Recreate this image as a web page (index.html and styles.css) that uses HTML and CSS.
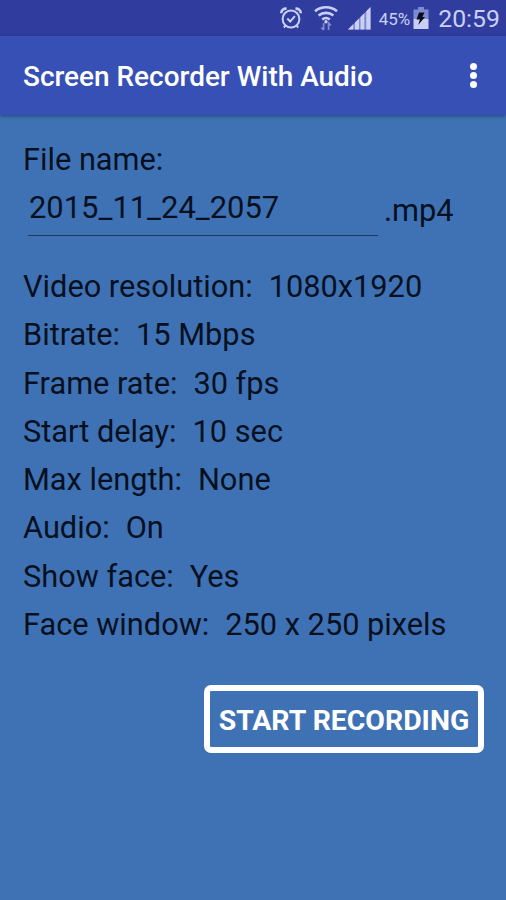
FILE: index.html
```html
<!DOCTYPE html>
<html lang="en">
  <head>
    <meta charset="UTF-8" />
    <meta name="viewport" content="width=device-width, initial-scale=1.0" />
    <title>Screen Recorder With Audio</title>
    <link rel="stylesheet" href="styles.css">
  </head>
  <body>
    <div class="status-bar">
      <svg class="icon-alarm" width="24" height="24" viewBox="0 0 24 24">
        <circle cx="12" cy="13" r="8.4" />
        <path d="M8.3 12.5l2.9 3 4.7-5.4M6.8 19.3l-2 2.2M17.2 19.3l2 2.2" />
        <path class="bells" d="M2.2 7.2c0-3 2.4-4.8 5.4-4.5M21.8 7.2c0-3-2.4-4.8-5.4-4.5" />
      </svg>
      <svg class="icon-wifi" width="26" height="26" viewBox="0 0 26 26">
        <path d="M2 6.2c6.4-5.2 15.6-5.2 22 0M5.6 10.6c4.4-3.6 10.4-3.6 14.8 0M9.2 14.6c2.3-1.9 5.3-1.9 7.6 0" />
        <circle cx="13" cy="16.8" r="1.7" />
        <path class="arrows" d="M10.6 18v7M8.4 22.6l2.2 2.4M15.6 25v-7l2.2 2.4" />
      </svg>
      <svg class="icon-signal" width="24" height="24" viewBox="0 0 24 24">
        <path class="dim" d="M1 23.5L23.5 1v22.5z" />
        <path d="M1 23.5l5.2-5.2v5.2zM8 16.5l4-4v11H8zM13.5 11l3.8-3.8v16.3h-3.8zM19.3 5.2L23.5 1v22.5h-4.2z" />
      </svg>
      <span class="battery-level">45%</span>
      <svg class="icon-battery" width="16" height="22" viewBox="0 0 16 22">
        <path class="dim" d="M5 0h6v2.5h4.5V12H.5V2.5H5z" />
        <path d="M.5 12h15v10H.5z" />
        <path class="bolt" d="M6 5.5h5.5L9.3 10H12l-6.8 8 1.7-5.5H3.5z" />
      </svg>
      <span class="clock">20:59</span>
    </div>

    <header class="app-bar">
      <h1>Screen Recorder With Audio</h1>
      <button class="menu-button" aria-label="More options">
        <span></span>
        <span></span>
        <span></span>
      </button>
    </header>

    <main class="content">
      <label class="file-label" for="fileName">File name:</label>
      <div class="file-row">
        <input class="file-input" id="fileName" type="text" value="2015_11_24_2057" spellcheck="false" />
        <span class="file-ext">.mp4</span>
      </div>

      <dl class="settings">
        <div><dt>Video resolution:</dt><dd>1080x1920</dd></div>
        <div><dt>Bitrate:</dt><dd>15 Mbps</dd></div>
        <div><dt>Frame rate:</dt><dd>30 fps</dd></div>
        <div><dt>Start delay:</dt><dd>10 sec</dd></div>
        <div><dt>Max length:</dt><dd>None</dd></div>
        <div><dt>Audio:</dt><dd>On</dd></div>
        <div><dt>Show face:</dt><dd>Yes</dd></div>
        <div><dt>Face window:</dt><dd>250 x 250 pixels</dd></div>
      </dl>

      <button class="start-button">START RECORDING</button>
    </main>
  </body>
</html>
```

FILE: styles.css
```css
/* Reset and Base Styles */
* {
  margin: 0;
  padding: 0;
  box-sizing: border-box;
}

body {
  display: flex;
  flex-direction: column;
  min-height: 100vh;
  background-color: #3f72b5;
  color: #06101f;
  font-family: Roboto, "Liberation Sans", sans-serif;
  font-size: 30.75px;
}

/* Status Bar */
.status-bar {
  display: flex;
  justify-content: flex-end;
  align-items: center;
  height: 36px;
  padding-right: 6px;
  background-color: #303d9f;
  color: #c9d0f4;
}

.status-bar svg {
  flex: none;
  fill: #c9d0f4;
}

.status-bar .dim {
  fill: #7f8bd0;
}

.icon-alarm,
.icon-wifi {
  stroke: #c9d0f4;
  stroke-width: 2;
}

.status-bar .icon-alarm,
.status-bar .icon-wifi path {
  fill: none;
}

.icon-alarm .bells {
  stroke-width: 2.6;
}

.icon-wifi {
  margin: 0 0 0 10px;
  stroke-width: 2.6;
}

.icon-wifi circle {
  stroke: none;
}

.icon-wifi .arrows {
  stroke: #7f8bd0;
  stroke-width: 1.8;
}

.icon-signal {
  margin: 0 8px 0 8px;
}

.battery-level {
  font-size: 17px;
  line-height: 34px;
  padding-top: 2px;
}

.icon-battery {
  margin: 0 9px 0 3px;
}

.status-bar .bolt {
  fill: #0a0d1c;
}

.clock {
  font-size: 24.8px;
  line-height: 34px;
  padding-top: 2px;
}

/* App Bar */
.app-bar {
  display: flex;
  justify-content: space-between;
  align-items: center;
  height: 79px;
  padding: 0 20px 0 23px;
  background-color: #3750b5;
  box-shadow: 0 1px 4px rgba(0, 0, 0, 0.4);
  color: #fff;
}

.app-bar h1 {
  font-size: 27.95px;
  font-weight: 500;
  padding-top: 2px;
}

.menu-button {
  display: flex;
  flex-direction: column;
  align-items: center;
  gap: 2px;
  width: 26px;
  border: none;
  background: none;
}

.menu-button span {
  width: 7px;
  height: 7px;
  border-radius: 50%;
  background-color: #fff;
}

/* Main Content */
.content {
  display: flex;
  flex-direction: column;
  padding: 27px 22px 0 23px;
}

.file-label {
  line-height: 36px;
}

.file-row {
  display: flex;
  align-items: flex-start;
  padding-left: 5px;
}

.file-input {
  width: 350px;
  height: 58px;
  padding: 1px 0 0 1px;
  border: none;
  border-bottom: 1px solid #1f3a60;
  outline: none;
  background: none;
  color: inherit;
  font: inherit;
  font-size: 30.9px;
}

.file-ext {
  padding: 15px 0 0 6px;
  line-height: 36px;
}

/* Settings List */
.settings {
  margin-top: 27px;
}

.settings div {
  display: flex;
  gap: 16px;
  line-height: 48.3px;
}

/* Start Button */
.start-button {
  align-self: flex-end;
  width: 280px;
  height: 68px;
  margin-top: 36px;
  padding-top: 2px;
  border: 6px solid #fff;
  border-radius: 7px;
  background: none;
  color: #fff;
  font-family: inherit;
  font-size: 28.4px;
  font-weight: 700;
  white-space: nowrap;
}
```
